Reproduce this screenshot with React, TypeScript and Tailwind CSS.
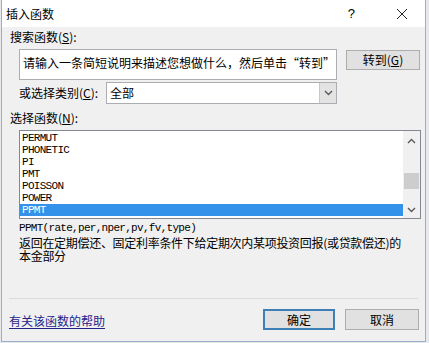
import React from 'react';

const cjk = "font-[family-name:'Noto_Sans_CJK_SC','Noto_Sans',sans-serif]";
const mono = "font-[family-name:'Liberation_Mono','Noto_Sans_CJK_SC',monospace]";

const functions = ['PERMUT', 'PHONETIC', 'PI', 'PMT', 'POISSON', 'POWER', 'PPMT'];

function Chevron({ up = false }: { up?: boolean }) {
  return (
    <svg width="9" height="6" viewBox="0 0 9 6" className="block">
      <path
        d={up ? 'M1 5 L4.5 1.5 L8 5' : 'M1 1 L4.5 4.5 L8 1'}
        fill="none"
        stroke="#5a5a5a"
        strokeWidth="1.4"
      />
    </svg>
  );
}

function Key({ k }: { k: string }) {
  return (
    <>
      (<span className="underline underline-offset-1">{k}</span>)
    </>
  );
}

export default function App() {
  return (
    <div className={`w-[429px] h-[343px] bg-[#e6e8eb] ${cjk} text-[12px] leading-[14px] text-black`}>
      <div className="w-[425px] h-[342px] ml-[1px] bg-[#f0f0f0] border-x border-b border-[#9aaecb] flex flex-col">
        {/* title bar */}
        <div className="h-[27px] bg-white flex items-center pl-[4px] shrink-0">
          <span>插入函数</span>
          <span className="ml-auto mr-[41px] text-[13px] font-[family-name:'Liberation_Sans',sans-serif]">?</span>
          <svg width="12" height="12" viewBox="0 0 12 12" className="mr-[17px]">
            <path d="M1 1 L11 11 M11 1 L1 11" stroke="#222" strokeWidth="1" />
          </svg>
        </div>

        {/* search */}
        <div className="pl-[8px] mt-[3px] h-[14px]">
          搜索函数<Key k="S" />:
        </div>
        <div className="flex items-start pl-[17px] mt-[5px]">
          <div className="w-[318px] h-[31px] bg-white border border-[#abadb3] px-[3px] pt-[6px] whitespace-nowrap overflow-hidden">
            请输入一条简短说明来描述您想做什么，然后单击“转到”
          </div>
          <button className="ml-[9px] mt-[1px] w-[74px] h-[20px] bg-[#e1e1e1] border border-[#adadad] flex items-center justify-center">
            转到<Key k="G" />
          </button>
        </div>

        {/* category */}
        <div className="flex items-center pl-[17px] mt-[2px]">
          <span className="w-[87px]">
            或选择类别<Key k="C" />:
          </span>
          <div className="w-[231px] h-[22px] bg-white border border-[#abadb3] flex items-center">
            <span className="pl-[3px] flex-1">全部</span>
            <div className="w-[17px] h-full bg-[#e3e3e3] border-l border-[#c8c8c8] flex items-center justify-center">
              <Chevron />
            </div>
          </div>
        </div>

        {/* function list */}
        <div className="pl-[8px] mt-[7px] h-[14px]">
          选择函数<Key k="N" />:
        </div>
        <div className="ml-[17px] mt-[5px] w-[402px] h-[89px] bg-white border border-[#828790] flex">
          <div className={`flex-1 pt-[1px] ${mono} text-[11px] tracking-[-0.7px]`}>
            {functions.map((f) => (
              <div
                key={f}
                className={`h-[12px] leading-[12px] pl-[2px] ${f === 'PPMT' ? 'bg-[#3592ea] text-white' : ''}`}
              >
                {f}
              </div>
            ))}
          </div>
          <div className="w-[17px] bg-[#f0f0f0] flex flex-col items-center">
            <div className="h-[17px] flex items-center justify-center mt-[1px]">
              <Chevron up />
            </div>
            <div className="w-[15px] h-[16px] bg-[#cdcdcd] mt-[24px]" />
            <div className="mt-auto h-[17px] flex items-center justify-center">
              <Chevron />
            </div>
          </div>
        </div>

        {/* description */}
        <div className={`pl-[17px] mt-[3px] ${mono} text-[11px] tracking-[-0.7px] leading-[12px]`}>
          PPMT(rate,per,nper,pv,fv,type)
        </div>
        <div className="pl-[17px] mt-[2px] pr-[8px] leading-[13px] tracking-[-0.3px]">
          <div>返回在定期偿还、固定利率条件下给定期次内某项投资回报(或贷款偿还)的</div>
          <div>本金部分</div>
        </div>

        {/* footer */}
        <div className="mt-auto mx-[7px] border-t border-[#dadada]" />
        <div className="flex items-center pl-[7px] pr-[6px] h-[41px] mb-[1px]">
          <a className="text-[#24238a] underline underline-offset-2 mt-[2px]">有关该函数的帮助</a>
          <button className="ml-auto w-[72px] h-[21px] bg-[#e1e1e1] border-2 border-[#3f7fb8] flex items-center justify-center">
            确定
          </button>
          <button className="ml-[10px] w-[74px] h-[21px] bg-[#e1e1e1] border border-[#adadad] flex items-center justify-center">
            取消
          </button>
        </div>
      </div>
    </div>
  );
}
